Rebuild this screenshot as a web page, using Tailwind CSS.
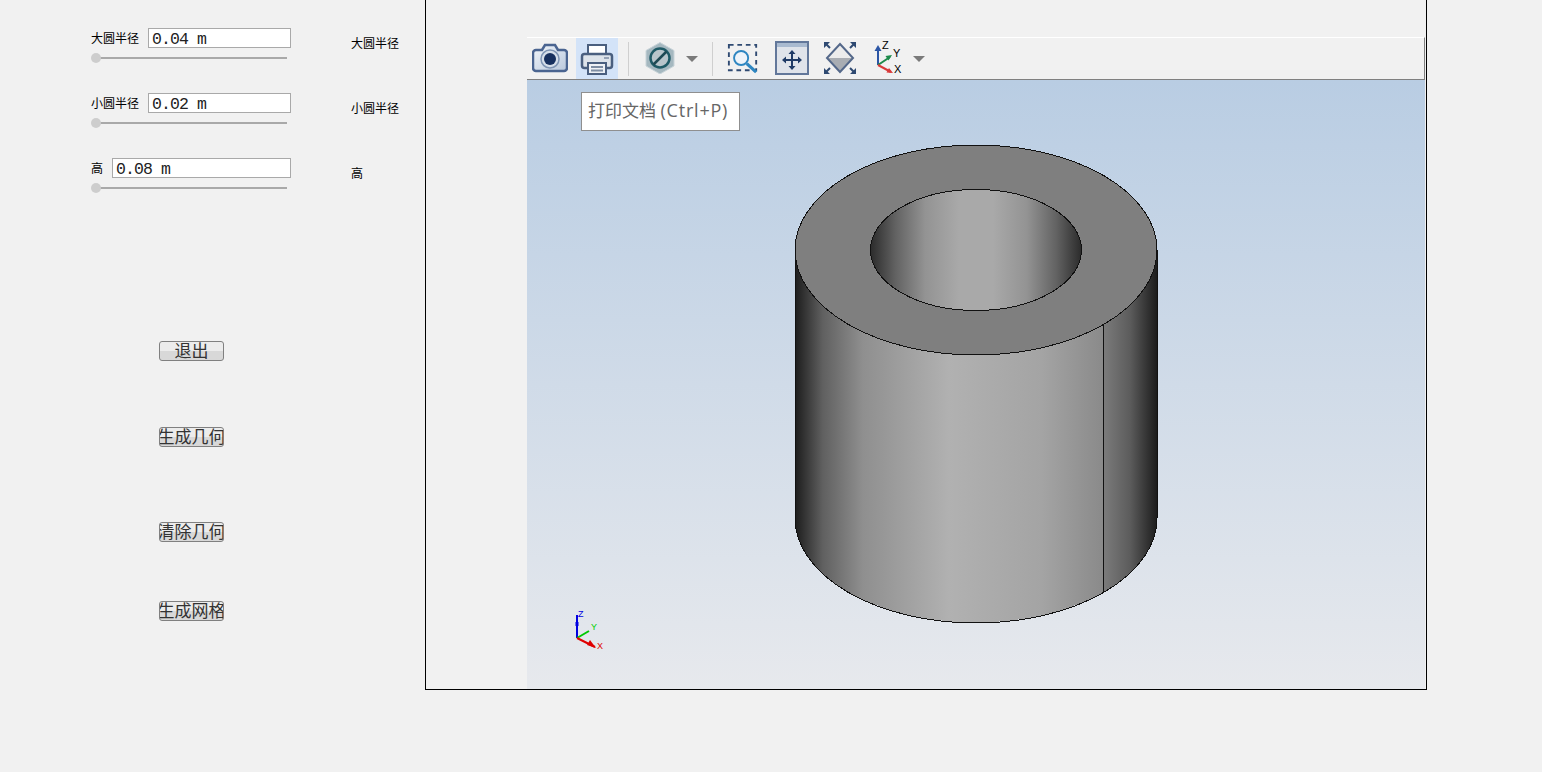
<!DOCTYPE html>
<html lang="en">
<head>
    <meta charset="UTF-8">
    <title>几何建模</title>
    <script src="https://cdn.jsdelivr.net/npm/@tailwindcss/browser@4"></script>
</head>
<body class="bg-[#f1f1f1] h-[772px] overflow-hidden flex font-['SimSun','Noto_Sans_CJK_SC',sans-serif] text-black">

<!-- Left panel -->
<div class="w-[425px] shrink-0 relative">
    <div class="pl-[91px] pt-[28px] w-[400px]">
        <!-- param rows -->
        <div class="h-[65px] flex">
            <div class="w-[200px]">
                <div class="flex items-center h-[20px]">
                    <span class="w-[57px] text-[12px] leading-none">大圆半径</span>
                    <span class="w-[143px] h-[20px] bg-white border border-[#a9a9a9] pl-[3px] text-[16.500px] tracking-[-0.900px] leading-[21px] text-[#222] font-['Liberation_Mono','Noto_Sans_CJK_SC',monospace]">0.04 m</span>
                </div>
                <div class="relative h-[2px] w-[191px] ml-[5px] mt-[9px] bg-[#a9a9a9]">
                    <span class="absolute -left-[5px] -top-[4px] w-[10px] h-[10px] rounded-full bg-[#cdcdcd]"></span>
                </div>
            </div>
            <span class="ml-[60px] mt-[9px] text-[12px] leading-none">大圆半径</span>
        </div>
        <div class="h-[65px] flex">
            <div class="w-[200px]">
                <div class="flex items-center h-[20px]">
                    <span class="w-[57px] text-[12px] leading-none">小圆半径</span>
                    <span class="w-[143px] h-[20px] bg-white border border-[#a9a9a9] pl-[3px] text-[16.500px] tracking-[-0.900px] leading-[21px] text-[#222] font-['Liberation_Mono','Noto_Sans_CJK_SC',monospace]">0.02 m</span>
                </div>
                <div class="relative h-[2px] w-[191px] ml-[5px] mt-[9px] bg-[#a9a9a9]">
                    <span class="absolute -left-[5px] -top-[4px] w-[10px] h-[10px] rounded-full bg-[#cdcdcd]"></span>
                </div>
            </div>
            <span class="ml-[60px] mt-[9px] text-[12px] leading-none">小圆半径</span>
        </div>
        <div class="h-[65px] flex">
            <div class="w-[200px]">
                <div class="flex items-center h-[20px]">
                    <span class="w-[21px] text-[12px] leading-none">高</span>
                    <span class="w-[179px] h-[20px] bg-white border border-[#a9a9a9] pl-[3px] text-[16.500px] tracking-[-0.900px] leading-[21px] text-[#222] font-['Liberation_Mono','Noto_Sans_CJK_SC',monospace]">0.08 m</span>
                </div>
                <div class="relative h-[2px] w-[191px] ml-[5px] mt-[9px] bg-[#a9a9a9]">
                    <span class="absolute -left-[5px] -top-[4px] w-[10px] h-[10px] rounded-full bg-[#cdcdcd]"></span>
                </div>
            </div>
            <span class="ml-[60px] mt-[9px] text-[12px] leading-none">高</span>
        </div>
    </div>

    <!-- Buttons: labels are wider than the button and get clipped on both sides -->
    <div class="pl-[159px] pt-[118px]">
        <button class="flex justify-center w-[65px] h-[20px] overflow-hidden whitespace-nowrap border border-[#808080] rounded-[3px] bg-gradient-to-b from-[#ececec] from-50% to-[#d8d8d8] to-50% text-[17px] leading-[16px] text-[#333]">退出</button>
        <button class="flex justify-center mt-[66px] w-[65px] h-[20px] overflow-hidden whitespace-nowrap border border-[#808080] rounded-[3px] bg-gradient-to-b from-[#ececec] from-50% to-[#d8d8d8] to-50% text-[17px] leading-[16px] text-[#333]"><span class="shrink-0">生成几何</span></button>
        <button class="flex justify-center mt-[75px] w-[65px] h-[20px] overflow-hidden whitespace-nowrap border border-[#808080] rounded-[3px] bg-gradient-to-b from-[#ececec] from-50% to-[#d8d8d8] to-50% text-[17px] leading-[16px] text-[#333]"><span class="shrink-0">清除几何</span></button>
        <button class="flex justify-center mt-[59px] w-[65px] h-[20px] overflow-hidden whitespace-nowrap border border-[#808080] rounded-[3px] bg-gradient-to-b from-[#ececec] from-50% to-[#d8d8d8] to-50% text-[17px] leading-[16px] text-[#333]"><span class="shrink-0">生成网格</span></button>
    </div>
</div>

<!-- Viewer frame -->
<div class="w-[1002px] h-[690px] shrink-0 border border-black border-t-0 bg-[#f1f1f1] pl-[101px] pt-[37px]">
    <div class="w-[898px] h-[652px] flex flex-col relative">
        <!-- Toolbar -->
        <div class="h-[43px] shrink-0 bg-[#f1f1f1] border-t border-white border-b border-b-[#808080] border-r border-r-[#808080] flex items-center pl-[3px]">
            <button class="w-[40px] h-[41px] flex items-center justify-center pb-[1px]">
                <svg width="36" height="32" viewBox="0 0 36 32">
                    <defs>
                        <linearGradient id="camBody" x1="0" y1="0" x2="1" y2="1">
                            <stop offset="0" stop-color="#f2f6fb"/>
                            <stop offset="1" stop-color="#b9c8dc"/>
                        </linearGradient>
                    </defs>
                    <path d="M4 8h6l3-5h10l3 5h6a3 3 0 0 1 3 3v15a3 3 0 0 1-3 3H4a3 3 0 0 1-3-3V11a3 3 0 0 1 3-3z" fill="url(#camBody)" stroke="#4a6490" stroke-width="2.500"/>
                    <circle cx="18" cy="17" r="9" fill="#d5deea" stroke="#7f95b4" stroke-width="1.500"/>
                    <circle cx="18" cy="17" r="6" fill="#17305f"/>
                </svg>
            </button>
            <button class="w-[42px] h-[41px] ml-[6px] bg-[#d3e3f8] flex items-center justify-center">
                <svg width="34" height="34" viewBox="0 0 34 34">
                    <path d="M8 12V3h18v9" fill="#fff" stroke="#4a5f7f" stroke-width="2"/>
                    <rect x="2" y="12" width="30" height="14" rx="2.500" fill="#dde3ea" stroke="#4a5f7f" stroke-width="2.500"/>
                    <rect x="8" y="21" width="18" height="11" fill="#eef1f5" stroke="#4a5f7f" stroke-width="2"/>
                    <path d="M11 25h12M11 28.500h12" stroke="#7d8da3" stroke-width="2"/>
                    <path d="M24 16h5" stroke="#7d8da3" stroke-width="1.500"/>
                </svg>
            </button>
            <span class="w-px h-[34px] bg-[#cfcfcf] ml-[10px]"></span>
            <button class="w-[30px] h-[41px] ml-[16px] flex items-center justify-center pb-[1px]">
                <svg width="30" height="32" viewBox="0 0 30 32">
                    <path d="M15 0.500l14 8v15.500l-14 8-14-8V8.500z" fill="#a5b8c0" stroke="#c9d4d9" stroke-width="1"/>
                    <circle cx="15" cy="16" r="9.500" fill="#b8c5cb" stroke="#1f5a66" stroke-width="2.500"/>
                    <path d="M8.500 22.500L21.500 9.500" stroke="#1f4a55" stroke-width="2.500"/>
                </svg>
            </button>
            <svg class="ml-[11px]" width="12" height="8" viewBox="0 0 12 8"><path d="M0 1h12L6 7z" fill="#7a7a7a"/></svg>
            <span class="w-px h-[34px] bg-[#cfcfcf] ml-[14px]"></span>
            <button class="w-[32px] h-[41px] ml-[14px] flex items-center justify-center pb-[1px]">
                <svg width="34" height="32" viewBox="0 0 34 32">
                    <rect x="2" y="2" width="29" height="27" fill="none" stroke="#2f4a72" stroke-width="2" stroke-dasharray="5 4"/>
                    <circle cx="15" cy="16" r="7.500" fill="#eef4fa" stroke="#2e86c1" stroke-width="2"/>
                    <path d="M21 22l10 9" stroke="#2e86c1" stroke-width="3.500"/>
                </svg>
            </button>
            <button class="w-[34px] h-[41px] ml-[16px] flex items-center justify-center pb-[1px]">
                <svg width="34" height="34" viewBox="0 0 34 34">
                    <rect x="1" y="1" width="32" height="32" fill="#dfe3ea" stroke="#62779a" stroke-width="2"/>
                    <rect x="2" y="2" width="30" height="4" fill="#a9bad0"/>
                    <path d="M17 11v16M9 19h16" stroke="#1f3a66" stroke-width="2"/>
                    <path d="M17 9l-3.500 4h7zM17 29l-3.500-4h7zM7 19l4-3.500v7zM27 19l-4-3.500v7z" fill="#1f3a66"/>
                </svg>
            </button>
            <button class="w-[34px] h-[41px] ml-[14px] flex items-center justify-center pb-[1px]">
                <svg width="34" height="34" viewBox="0 0 34 34">
                    <path d="M17 3L30 17 17 31 4 17z" fill="#ececec"/>
                    <path d="M4 17h26L17 31z" fill="#a9adb3"/>
                    <path d="M17 3L30 17 17 31 4 17z" fill="none" stroke="#54688a" stroke-width="2"/>
                    <path d="M1 1h6L1 7zM33 1h-6l6 6zM1 33h6l-6-6zM33 33h-6l6-6z" fill="#2f4a72"/>
                    <path d="M3 3l4 4M31 3l-4 4M3 31l4-4M31 31l-4-4" stroke="#2f4a72" stroke-width="2"/>
                </svg>
            </button>
            <button class="w-[34px] h-[41px] ml-[15px] relative flex items-center justify-center">
                <svg width="32" height="34" viewBox="0 0 32 34">
                    <path d="M5 23V7" stroke="#2b55a5" stroke-width="2"/>
                    <path d="M5 3l-3.500 6h7z" fill="#2b55a5"/>
                    <path d="M5 23L17 15" stroke="#1d8a4a" stroke-width="2"/>
                    <path d="M19 13l-6.500 1 3 4.500z" fill="#1d8a4a"/>
                    <path d="M5 23l13 7" stroke="#d93a3a" stroke-width="2"/>
                    <path d="M20 31l-6.500-.5 2.500-4.500z" fill="#d93a3a"/>
                </svg>
                <span class="absolute left-[10px] top-[2px] text-[11px] leading-none font-['Liberation_Sans',sans-serif]">Z</span>
                <span class="absolute left-[21px] top-[10px] text-[11px] leading-none font-['Liberation_Sans',sans-serif]">Y</span>
                <span class="absolute left-[22px] top-[26px] text-[11px] leading-none font-['Liberation_Sans',sans-serif]">X</span>
            </button>
            <svg class="ml-[7px]" width="12" height="8" viewBox="0 0 12 8"><path d="M0 1h12L6 7z" fill="#7a7a7a"/></svg>
        </div>

        <!-- 3D view -->
        <div class="flex-1 relative bg-gradient-to-b from-[#b9cde3] to-[#e7e9ed]">
            <svg class="block" width="898" height="609" viewBox="527 80 898 609">
                <defs>
                    <linearGradient id="outerA" gradientUnits="userSpaceOnUse" x1="795" y1="0" x2="1103" y2="0">
                        <stop offset="0" stop-color="#1c1c1c"/>
                        <stop offset="0.09" stop-color="#606060"/>
                        <stop offset="0.22" stop-color="#8f8f8f"/>
                        <stop offset="0.5" stop-color="#b1b1b1"/>
                        <stop offset="0.8" stop-color="#a4a4a4"/>
                        <stop offset="1" stop-color="#8a8a8a"/>
                    </linearGradient>
                    <linearGradient id="outerB" gradientUnits="userSpaceOnUse" x1="1103" y1="0" x2="1157" y2="0">
                        <stop offset="0" stop-color="#7c7c7c"/>
                        <stop offset="0.5" stop-color="#5c5c5c"/>
                        <stop offset="1" stop-color="#1c1c1c"/>
                    </linearGradient>
                    <linearGradient id="inner" gradientUnits="userSpaceOnUse" x1="870" y1="0" x2="1082" y2="0">
                        <stop offset="0" stop-color="#2a2a2a"/>
                        <stop offset="0.12" stop-color="#626262"/>
                        <stop offset="0.26" stop-color="#939393"/>
                        <stop offset="0.42" stop-color="#a9a9a9"/>
                        <stop offset="0.58" stop-color="#a9a9a9"/>
                        <stop offset="0.74" stop-color="#939393"/>
                        <stop offset="0.88" stop-color="#626262"/>
                        <stop offset="1" stop-color="#2a2a2a"/>
                    </linearGradient>
                </defs>
                <!-- outer wall -->
                <g shape-rendering="crispEdges">
                    <path d="M795 250V518A181 105 0 0 0 1103.500 592V250z" fill="url(#outerA)"/>
                    <path d="M1103.500 250V592A181 105 0 0 0 1157 518V250z" fill="url(#outerB)"/>
                    <path d="M795 250V518A181 105 0 0 0 1157 518V250" fill="none" stroke="#111" stroke-width="1"/>
                    <path d="M1103.500 325V592" stroke="#111" stroke-width="1"/>
                    <!-- top face -->
                    <ellipse cx="976" cy="250" rx="181" ry="105" fill="#7f7f7f" stroke="#111" stroke-width="1"/>
                    <ellipse cx="976" cy="250" rx="105.500" ry="60.500" fill="url(#inner)" stroke="#111" stroke-width="1"/>
                </g>
                <!-- triad -->
                <path d="M577 638V615" stroke="#0000e0" stroke-width="2"/>
                <rect x="575.500" y="622" width="3" height="4" fill="#0000e0"/>
                <path d="M577 638l12-7" stroke="#00c800" stroke-width="2"/>
                <path d="M577 638l18 9" stroke="#e00000" stroke-width="2"/>
                <path d="M590 640l6 8-9-3z" fill="#e00000"/>
                <text x="578" y="617" font-family="Liberation Sans, sans-serif" font-size="9" fill="#0000e0">Z</text>
                <text x="591" y="630" font-family="Liberation Sans, sans-serif" font-size="9" fill="#00d000">Y</text>
                <text x="597" y="649" font-family="Liberation Sans, sans-serif" font-size="9" fill="#e00000">X</text>
            </svg>
        </div>

        <!-- Tooltip -->
        <div class="absolute left-[54px] top-[55px] h-[39px] w-[159px] bg-white border border-[#8f8f8f] text-[17px] leading-[35px] pl-[6px] text-[#666] whitespace-nowrap font-['Open_Sans','Noto_Sans_CJK_SC',sans-serif]">打印文档 <span class="text-[18px] tracking-[0.800px]">(Ctrl+P)</span></div>
    </div>
</div>

</body>
</html>
